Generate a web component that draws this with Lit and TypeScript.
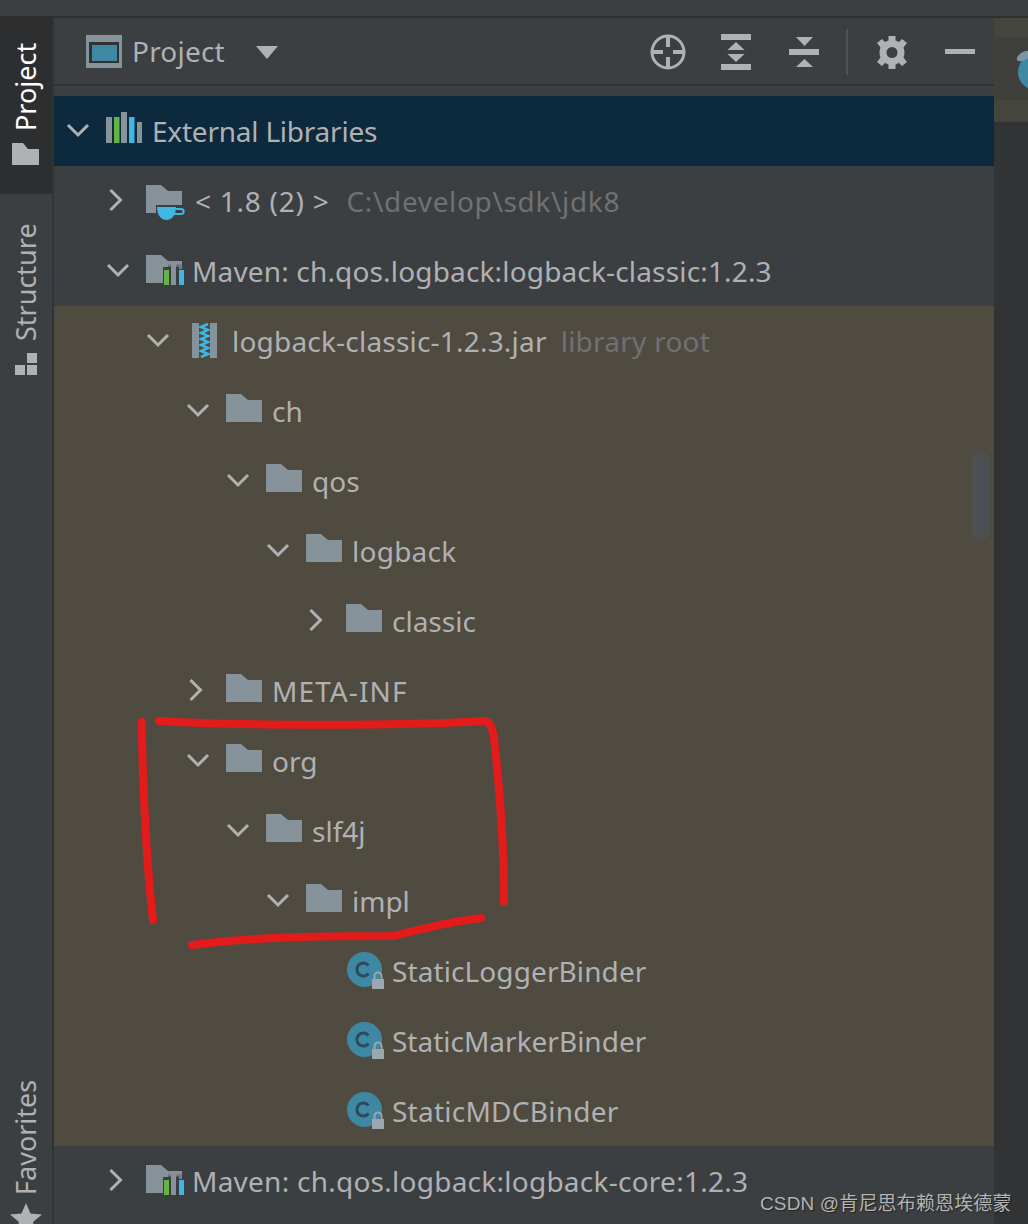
import { LitElement, html, css, svg, nothing } from "lit";
import { customElement } from "lit/decorators.js";

type Row = { depth: number; arrow?: "down" | "right"; icon: string; text: string; hint?: string; bg: string; track?: number; hintTrack?: number; lead?: number; hintLead?: number };

const FOLDER_GREY = "#87939a";
const TEAL = "#3f88a4";

const icons: Record<string, unknown> = {
  bars: svg`<rect x="0" y="4" width="6" height="26" fill="${FOLDER_GREY}"/><rect x="8" y="4" width="5.500" height="26" fill="#62b543"/><rect x="15" y="-1" width="6" height="31" fill="${FOLDER_GREY}"/><rect x="23" y="4" width="5.500" height="26" fill="#40b6e0"/><rect x="31" y="9" width="5" height="21" fill="${FOLDER_GREY}"/>`,
  jdk: svg`<path d="M0 2H15L22 8H36V22H10V30H0Z" fill="${FOLDER_GREY}"/><path d="M11 24H30C30 32 26 37 20.500 37C15 37 11 32 11 24Z" fill="#40b6e0"/><path d="M30 26H35C38.500 26 38.500 31 35 31H27" fill="none" stroke="#40b6e0" stroke-width="2"/>`,
  maven: svg`<path d="M0 2H15L22 8H36V11H22V14H17V30H0Z" fill="${FOLDER_GREY}"/><path d="M22 11H36V16H33V13.500H22Z" fill="#737d82"/><rect x="18" y="17" width="5" height="15" fill="#62b543"/><rect x="25" y="11" width="5" height="21" fill="${FOLDER_GREY}"/><rect x="33" y="17" width="5" height="15" fill="#40b6e0"/>`,
  jar: svg`<rect x="6" y="0" width="25" height="35" fill="${FOLDER_GREY}"/><rect x="13" y="0" width="11" height="35" fill="#4a4c48"/><path d="M22 1L15 4L22 7L15 10L22 13L15 16L22 19L15 22L22 25L15 28L22 31L15 34" fill="none" stroke="#40b6e0" stroke-width="2.500"/>`,
  folder: svg`<path d="M0 1H15L22 7H36V29H0Z" fill="${FOLDER_GREY}"/>`,
  cls: svg`<circle cx="18.500" cy="16.500" r="17.500" fill="${TEAL}"/><path d="M22.500 12.500A6.500 6.500 0 1 0 22.500 20.500" fill="none" stroke="#2b4a5d" stroke-width="3"/><path d="M28.500 26V23A3.500 3.500 0 0 1 35.500 23V26" fill="none" stroke="#9aa7b0" stroke-width="2"/><rect x="26" y="26" width="12" height="10" fill="#9aa7b0"/>`,
};

const NAVY = "#0d293e";
const GREY = "#3c3f41";
const BROWN = "#4f4b41";

const rows: Row[] = [
  { depth: 0, arrow: "down", icon: "bars", text: "External Libraries", bg: NAVY, track: -0.22 },
  { depth: 1, arrow: "right", icon: "jdk", text: "< 1.8 (2) >", hint: "C:\\develop\\sdk\\jdk8", bg: GREY, track: 0.75, hintTrack: 0.65, lead: 3, hintLead: 17 },
  { depth: 1, arrow: "down", icon: "maven", text: "Maven: ch.qos.logback:logback-classic:1.2.3", bg: GREY, track: 0.16 },
  { depth: 2, arrow: "down", icon: "jar", text: "logback-classic-1.2.3.jar", hint: "library root", bg: BROWN, track: 0.2, hintTrack: 0.25 },
  { depth: 3, arrow: "down", icon: "folder", text: "ch", bg: BROWN },
  { depth: 4, arrow: "down", icon: "folder", text: "qos", bg: BROWN },
  { depth: 5, arrow: "down", icon: "folder", text: "logback", bg: BROWN, track: 0.25 },
  { depth: 6, arrow: "right", icon: "folder", text: "classic", bg: BROWN },
  { depth: 3, arrow: "right", icon: "folder", text: "META-INF", bg: BROWN, track: 1.1 },
  { depth: 3, arrow: "down", icon: "folder", text: "org", bg: BROWN },
  { depth: 4, arrow: "down", icon: "folder", text: "slf4j", bg: BROWN },
  { depth: 5, arrow: "down", icon: "folder", text: "impl", bg: BROWN },
  { depth: 6, icon: "cls", text: "StaticLoggerBinder", bg: BROWN, track: 0.1 },
  { depth: 6, icon: "cls", text: "StaticMarkerBinder", bg: BROWN },
  { depth: 6, icon: "cls", text: "StaticMDCBinder", bg: BROWN, track: 0.25 },
  { depth: 1, arrow: "right", icon: "maven", text: "Maven: ch.qos.logback:logback-core:1.2.3", bg: GREY, track: 0.25 },
];

@customElement("app-root")
export class AppRoot extends LitElement {
  static styles = css`
    :host {
      display: block;
      position: relative;
      width: 1028px;
      height: 1224px;
      overflow: hidden;
      background: #3c3f41;
      font-family: "Noto Sans", "Open Sans", sans-serif;
      color: #afb1b3;
    }
    .top { height: 16px; background: #3c3f41; border-bottom: 2px solid #2f2f2f; }
    .main { display: flex; height: 1206px; }
    .side {
      width: 52px;
      flex: none;
      display: flex;
      flex-direction: column;
      border-right: 2px solid #323335;
      background: #3c3f41;
    }
    .tab {
      display: flex;
      align-items: center;
      gap: 12px;
      writing-mode: vertical-rl;
      transform: rotate(180deg);
      font-size: 27px;
      line-height: 52px;
      width: 52px;
      box-sizing: border-box;
      flex: none;
    }
    .tab svg { flex: none; transform: rotate(180deg); }
    .tab.active { background: #2d2e30; color: #fff; height: 176px; padding-top: 29px; }
    .tab.struct { height: 186px; padding-top: 5px; }
    .tab.fav { height: 155px; padding-top: 0; gap: 8px; margin-bottom: -9px; }
    .spacer { flex: 1; }
    .panel { width: 940px; flex: none; display: flex; flex-direction: column; min-width: 0; }
    .head {
      height: 66px;
      flex: none;
      display: flex;
      align-items: center;
      padding-left: 32px;
      border-bottom: 2px solid #323335;
    }
    .head .title { font-size: 28px; margin-left: 10px; letter-spacing: 0.2px; }
    .head .caret { margin: 3px 0 0 31px; }
    .tools { margin-left: auto; padding-top: 2px; display: flex; align-items: center; }
    .tool { display: block; }
    .t-target { margin-right: 35px; }
    .t-expand { margin-right: 38px; }
    .t-gear { margin-right: 37px; }
    .t-min { margin-right: 19px; }
    .sep { width: 2px; height: 46px; background: #515355; margin: 0 28px 0 27px; }
    .gap { height: 10px; flex: none; }
    .rows { flex: 1; display: flex; flex-direction: column; }
    .row { height: 70px; flex: none; display: flex; align-items: center; box-sizing: border-box; font-size: 28px; white-space: nowrap; }
    .arrow { width: 40px; flex: none; display: block; }
    .icon { width: 36px; height: 36px; flex: none; margin-right: 10px; overflow: visible; display: block; }
    .hint { color: #6f7173; margin-left: 14px; }
    .right { flex: 1; background: #323335; display: flex; flex-direction: column; }
    .peek {
      height: 104px;
      overflow: hidden;
      background: linear-gradient(#46453d 0 19px, #3f3f3c 19px 82px, #46453d 82px);
    }
    .peek svg { display: block; margin: 32px 0 0 22px; }
    .thumb {
      position: absolute;
      left: 972px;
      top: 452px;
      width: 18px;
      height: 88px;
      border-radius: 9px;
      background: #4c5052;
    }
    .ink { position: absolute; left: 0; top: 0; pointer-events: none; }
    .mark {
      position: absolute;
      left: 760px;
      top: 1191px;
      font-family: "Liberation Sans", "Noto Sans CJK SC", sans-serif;
      font-size: 19px;
      letter-spacing: 0.15px;
      line-height: 26px;
      color: #b4b4b4;
      text-shadow: 1px 1px 1px #222;
      white-space: nowrap;
    }
  `;

  private arrow(dir?: string) {
    if (!dir) return html`<span class="arrow"></span>`;
    return html`<svg class="arrow" width="40" height="28" viewBox="0 0 40 28">
      ${dir === "down"
        ? svg`<path d="M2 8L12 18L22 8" fill="none" stroke="#afb1b3" stroke-width="3"/>`
        : svg`<path d="M4.500 3L14.500 13L4.500 23" fill="none" stroke="#afb1b3" stroke-width="3"/>`}
    </svg>`;
  }

  private row(r: Row) {
    return html`<div class="row" style="background:${r.bg};padding-left:${12 + 40 * r.depth}px">
      ${this.arrow(r.arrow)}
      <svg class="icon" viewBox="0 0 36 36">${icons[r.icon]}</svg>
      <span style="letter-spacing:${r.track ?? 0}px;margin-left:${r.lead ?? 0}px">${r.text}</span>
      ${r.hint
        ? html`<span class="hint" style="letter-spacing:${r.hintTrack ?? 0}px;margin-left:${r.hintLead ?? 14}px">${r.hint}</span>`
        : nothing}
    </div>`;
  }

  render() {
    return html`
      <div class="top"></div>
      <div class="main">
        <div class="side">
          <div class="tab active">
            <svg width="27" height="22" viewBox="0 0 27 22"><path d="M0 0H11L16 6H27V22H0Z" fill="#afb1b3"/></svg>
            <span>Project</span>
          </div>
          <div class="tab struct">
            <svg width="22" height="22" viewBox="0 0 22 22"><path d="M12 0H22V10H12ZM0 12H10V22H0ZM12 12H22V22H12Z" fill="#afb1b3"/></svg>
            <span>Structure</span>
          </div>
          <div class="spacer"></div>
          <div class="tab fav">
            <svg width="32" height="30" viewBox="0 0 32 30"><path d="M16 0L20.500 10.500L32 11.500L23 19L26 30L16 24L6 30L9 19L0 11.500L11.500 10.500Z" fill="#afb1b3"/></svg>
            <span>Favorites</span>
          </div>
        </div>
        <div class="panel">
          <div class="head">
            <svg width="36" height="33" viewBox="0 0 36 33"><rect width="36" height="33" fill="#87939a"/><rect x="3" y="7" width="30" height="21" fill="#2f3133"/><rect x="6" y="10" width="25" height="16" fill="${TEAL}"/></svg>
            <span class="title">Project</span>
            <svg class="caret" width="22" height="13" viewBox="0 0 22 13"><path d="M0 0H22L11 13Z" fill="#afb1b3"/></svg>
            <div class="tools">
              <svg class="tool t-target" width="36" height="36" viewBox="0 0 36 36">
                <circle cx="18" cy="18" r="16" fill="none" stroke="#afb1b3" stroke-width="3"/>
                <path d="M18 2V13M18 23V34M2 18H13M23 18H34" stroke="#afb1b3" stroke-width="4"/>
              </svg>
              <svg class="tool t-expand" width="30" height="36" viewBox="0 0 30 36"><path d="M0 0H30V6H0ZM0 30H30V36H0ZM15 8L23.500 16H6.500ZM6.500 20H23.500L15 28Z" fill="#afb1b3"/></svg>
              <svg class="tool" width="30" height="30" viewBox="0 0 30 30"><path d="M0 12H30V18H0ZM7 0H24L15.500 9ZM15.500 22L24 30H7Z" fill="#afb1b3"/></svg>
              <div class="sep"></div>
              <svg class="tool t-gear" width="32" height="33" viewBox="0 0 32 33">
                <circle cx="16" cy="16.500" r="9" fill="none" stroke="#afb1b3" stroke-width="7"/>
                <path d="M12.500 0H19.500V6H12.500ZM12.500 27H19.500V33H12.500ZM1 7L6 3L11 8L5 12ZM31 7L26 3L21 8L27 12ZM1 26L6 30L11 25L5 21ZM31 26L26 30L21 25L27 21Z" fill="#afb1b3"/>
              </svg>
              <svg class="tool t-min" width="30" height="6" viewBox="0 0 30 6"><rect width="30" height="5" fill="#afb1b3"/></svg>
            </div>
          </div>
          <div class="gap"></div>
          <div class="rows">${rows.map((r) => this.row(r))}</div>
        </div>
        <div class="right">
          <div class="peek">
            <svg width="40" height="40" viewBox="0 0 40 40"><circle cx="20" cy="22" r="18" fill="${TEAL}"/><ellipse cx="8" cy="6" rx="8" ry="4" transform="rotate(-30 8 6)" fill="#7d96a6"/></svg>
          </div>
        </div>
      </div>
      <div class="thumb"></div>
      <svg class="ink" width="1028" height="1224" viewBox="0 0 1028 1224" fill="none" stroke="#e31b1b" stroke-width="8" stroke-linecap="round" stroke-linejoin="round">
        <path d="M142 722C142 770 146 860 153 920"/>
        <path d="M159 721C240 726 400 726 484 721C490 721 492 727 494 738C500 790 504 850 504 902"/>
        <path d="M192 945C250 937 320 936 392 936C420 930 440 923 481 918"/>
      </svg>
      <div class="mark">CSDN @肯尼思布赖恩埃德蒙</div>
    `;
  }
}
